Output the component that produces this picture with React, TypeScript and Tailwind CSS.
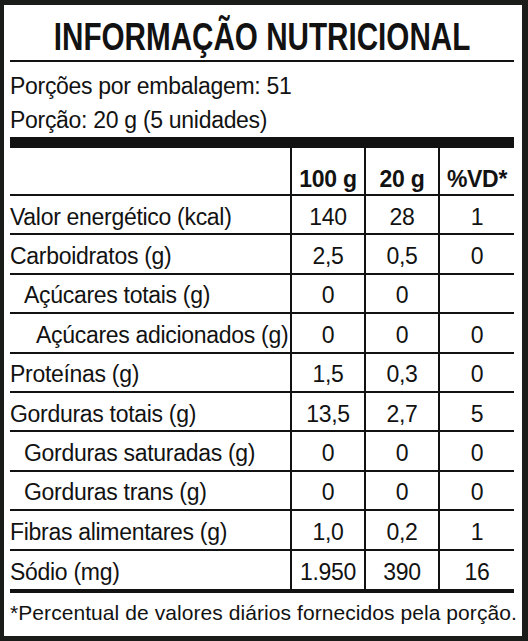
const rows: { label: string; a: string; b: string; vd: string; indent: number }[] = [
  { label: "Valor energético (kcal)", a: "140", b: "28", vd: "1", indent: 0 },
  { label: "Carboidratos (g)", a: "2,5", b: "0,5", vd: "0", indent: 0 },
  { label: "Açúcares totais (g)", a: "0", b: "0", vd: "", indent: 1 },
  { label: "Açúcares adicionados (g)", a: "0", b: "0", vd: "0", indent: 2 },
  { label: "Proteínas (g)", a: "1,5", b: "0,3", vd: "0", indent: 0 },
  { label: "Gorduras totais (g)", a: "13,5", b: "2,7", vd: "5", indent: 0 },
  { label: "Gorduras saturadas (g)", a: "0", b: "0", vd: "0", indent: 1 },
  { label: "Gorduras trans (g)", a: "0", b: "0", vd: "0", indent: 1 },
  { label: "Fibras alimentares (g)", a: "1,0", b: "0,2", vd: "1", indent: 0 },
  { label: "Sódio (mg)", a: "1.950", b: "390", vd: "16", indent: 0 },
];

const indentClass = ["pl-0", "pl-[14px]", "pl-[26px]"];

export default function App() {
  return (
    <div
      className="h-[641px] w-[528px] overflow-hidden bg-[#1a1c1a] pt-[5px] pl-[4px] pr-[6px] pb-[5px] text-[#121212]"
      style={{ fontFamily: '"Liberation Sans", Arial, sans-serif' }}
    >
      <div className="flex h-full flex-col bg-white pl-[6px] pr-[8px]">
        {/* title */}
        <div className="flex h-[57px] shrink-0 items-end justify-center overflow-hidden border-b-2 border-[#121212] pb-[4px]">
          <h1 className="inline-block shrink-0 scale-x-[0.78] whitespace-nowrap text-[38px] font-bold leading-none">
            INFORMAÇÃO NUTRICIONAL
          </h1>
        </div>
        <div className="h-[36px] shrink-0 pt-[13px] text-[23px] leading-none tracking-[-0.3px]">
          Porções por embalagem: 51
        </div>
        <div className="h-[39px] shrink-0 pt-[11px] text-[23px] leading-none tracking-[-0.3px]">
          Porção: 20 g (5 unidades)
        </div>
        <div className="h-[11px] shrink-0 bg-[#121212]" />

        {/* table */}
        <div className="grid h-[48px] shrink-0 grid-cols-[280px_74px_74px_1fr] border-b-2 border-[#121212] text-[23px] font-bold leading-none tracking-[-0.3px]">
          <div />
          <div className="flex items-end justify-center border-l-2 border-[#121212] pb-[3px]">100 g</div>
          <div className="flex items-end justify-center border-l-2 border-[#121212] pb-[3px]">20 g</div>
          <div className="flex items-end justify-center border-l-2 border-[#121212] pb-[3px]">%VD*</div>
        </div>
        {rows.map((r, i) => {
          const last = i === rows.length - 1;
          return (
            <div
              key={r.label}
              className={
                "grid shrink-0 grid-cols-[280px_74px_74px_1fr] text-[23px] leading-none tracking-[-0.3px] " +
                (last ? "h-[42.5px] border-b-4 border-[#121212]" : "h-[39.4px] border-b-2 border-[#121212]")
              }
            >
              <div className={"flex items-center whitespace-nowrap pt-[5px] " + indentClass[r.indent]}>{r.label}</div>
              <div className="flex items-center justify-center border-l-2 border-[#121212] pt-[5px]">{r.a}</div>
              <div className="flex items-center justify-center border-l-2 border-[#121212] pt-[5px]">{r.b}</div>
              <div className="flex items-center justify-center border-l-2 border-[#121212] pt-[5px]">{r.vd}</div>
            </div>
          );
        })}

        <div className="whitespace-nowrap pt-[9px] text-[21px] leading-none tracking-[0.07px]">
          *Percentual de valores diários fornecidos pela porção.
        </div>
      </div>
    </div>
  );
}
